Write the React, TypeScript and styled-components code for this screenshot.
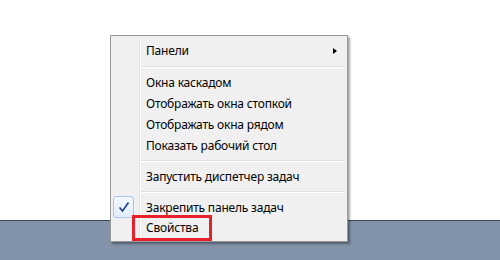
import React, { FC } from "react";
import styled, { createGlobalStyle } from "styled-components";

const GlobalStyle = createGlobalStyle`
  html, body {
    margin: 0;
    padding: 0;
    background: #ffffff;
  }
  body {
    font-family: "Noto Sans", "Segoe UI", sans-serif;
  }
`;

type Entry =
  | { kind: "item"; label: string; submenu?: boolean; checked?: boolean; marked?: boolean }
  | { kind: "sep"; wide?: boolean };

const entries: Entry[] = [
  { kind: "item", label: "Панели", submenu: true },
  { kind: "sep", wide: true },
  { kind: "item", label: "Окна каскадом" },
  { kind: "item", label: "Отображать окна стопкой" },
  { kind: "item", label: "Отображать окна рядом" },
  { kind: "item", label: "Показать рабочий стол" },
  { kind: "sep" },
  { kind: "item", label: "Запустить диспетчер задач" },
  { kind: "sep" },
  { kind: "item", label: "Закрепить панель задач", checked: true },
  { kind: "item", label: "Свойства", marked: true },
];

const App: FC = () => {
  return (
    <>
      <GlobalStyle />
      <Screen>
        <Desktop />
        <Taskbar />
        <Menu>
          <Gutter />
          {entries.map((e, i) =>
            e.kind === "sep" ? (
              <Separator key={i} $wide={!!e.wide} />
            ) : (
              <Item key={i}>
                <CheckCell>
                  {e.checked && (
                    <CheckBox>
                      <svg width="12" height="12" viewBox="0 0 12 12">
                        <path
                          d="M1.5 6.5 L4.5 10 L10.5 1.5"
                          fill="none"
                          stroke="#1b3b8f"
                          strokeWidth="1.6"
                        />
                      </svg>
                    </CheckBox>
                  )}
                </CheckCell>
                <Label>{e.marked ? <Marked>{e.label}</Marked> : e.label}</Label>
                {e.submenu && <Arrow />}
              </Item>
            )
          )}
        </Menu>
      </Screen>
    </>
  );
};

const Screen = styled("div")({
  position: "relative",
  width: "500px",
  height: "260px",
  display: "flex",
  flexDirection: "column",
  overflow: "hidden",
});

const Desktop = styled("div")({
  height: "220px",
  background: "#ffffff",
});

const Taskbar = styled("div")({
  flex: 1,
  background: "#8292a8",
  borderTop: "1px solid #3e4857",
});

const Menu = styled("div")({
  position: "absolute",
  left: "110px",
  top: "35px",
  width: "236px",
  padding: "4px 0 2px 0",
  background: "#f0f0f0",
  border: "1px solid #979797",
  boxShadow: "2px 2px 2px rgba(0, 0, 0, 0.35)",
  display: "flex",
  flexDirection: "column",
});

const Gutter = styled("div")({
  position: "absolute",
  left: "28px",
  top: "2px",
  bottom: "2px",
  width: "1px",
  background: "#e2e3e3",
  borderRight: "1px solid #ffffff",
});

const Item = styled("div")({
  position: "relative",
  height: "21px",
  display: "flex",
  alignItems: "center",
  fontSize: "12px",
  letterSpacing: "-0.2px",
  color: "#000000",
});

const CheckCell = styled("div")({
  width: "35px",
  display: "flex",
  alignItems: "center",
  paddingLeft: "2px",
  boxSizing: "border-box",
});

const CheckBox = styled("div")({
  width: "21px",
  height: "22px",
  marginTop: "-1px",
  boxSizing: "border-box",
  border: "1px solid #a8c6ec",
  borderRadius: "3px",
  background: "linear-gradient(#f2f7fd, #e3edfa)",
  display: "flex",
  alignItems: "center",
  justifyContent: "center",
});

const Label = styled("span")({
  flex: 1,
  whiteSpace: "nowrap",
  lineHeight: "21px",
});

const Marked = styled("span")({
  display: "inline-block",
  marginLeft: "-14px",
  padding: "0 11px",
  height: "20px",
  lineHeight: "20px",
  border: "3px solid #e8202a",
  position: "relative",
  top: "-1px",
});

const Arrow = styled("div")({
  width: 0,
  height: 0,
  marginRight: "10px",
  borderTop: "3.5px solid transparent",
  borderBottom: "3.5px solid transparent",
  borderLeft: "4px solid #000000",
});

const Separator = styled("div")<{ $wide: boolean }>(({ $wide }) => ({
  height: $wide ? "11px" : "10px",
  display: "flex",
  alignItems: "center",
  paddingLeft: "30px",
  paddingRight: "2px",
  "&::after": {
    content: '""',
    flex: 1,
    height: "1px",
    background: "#e0e0e0",
    borderBottom: "1px solid #ffffff",
  },
}));

export default App;
